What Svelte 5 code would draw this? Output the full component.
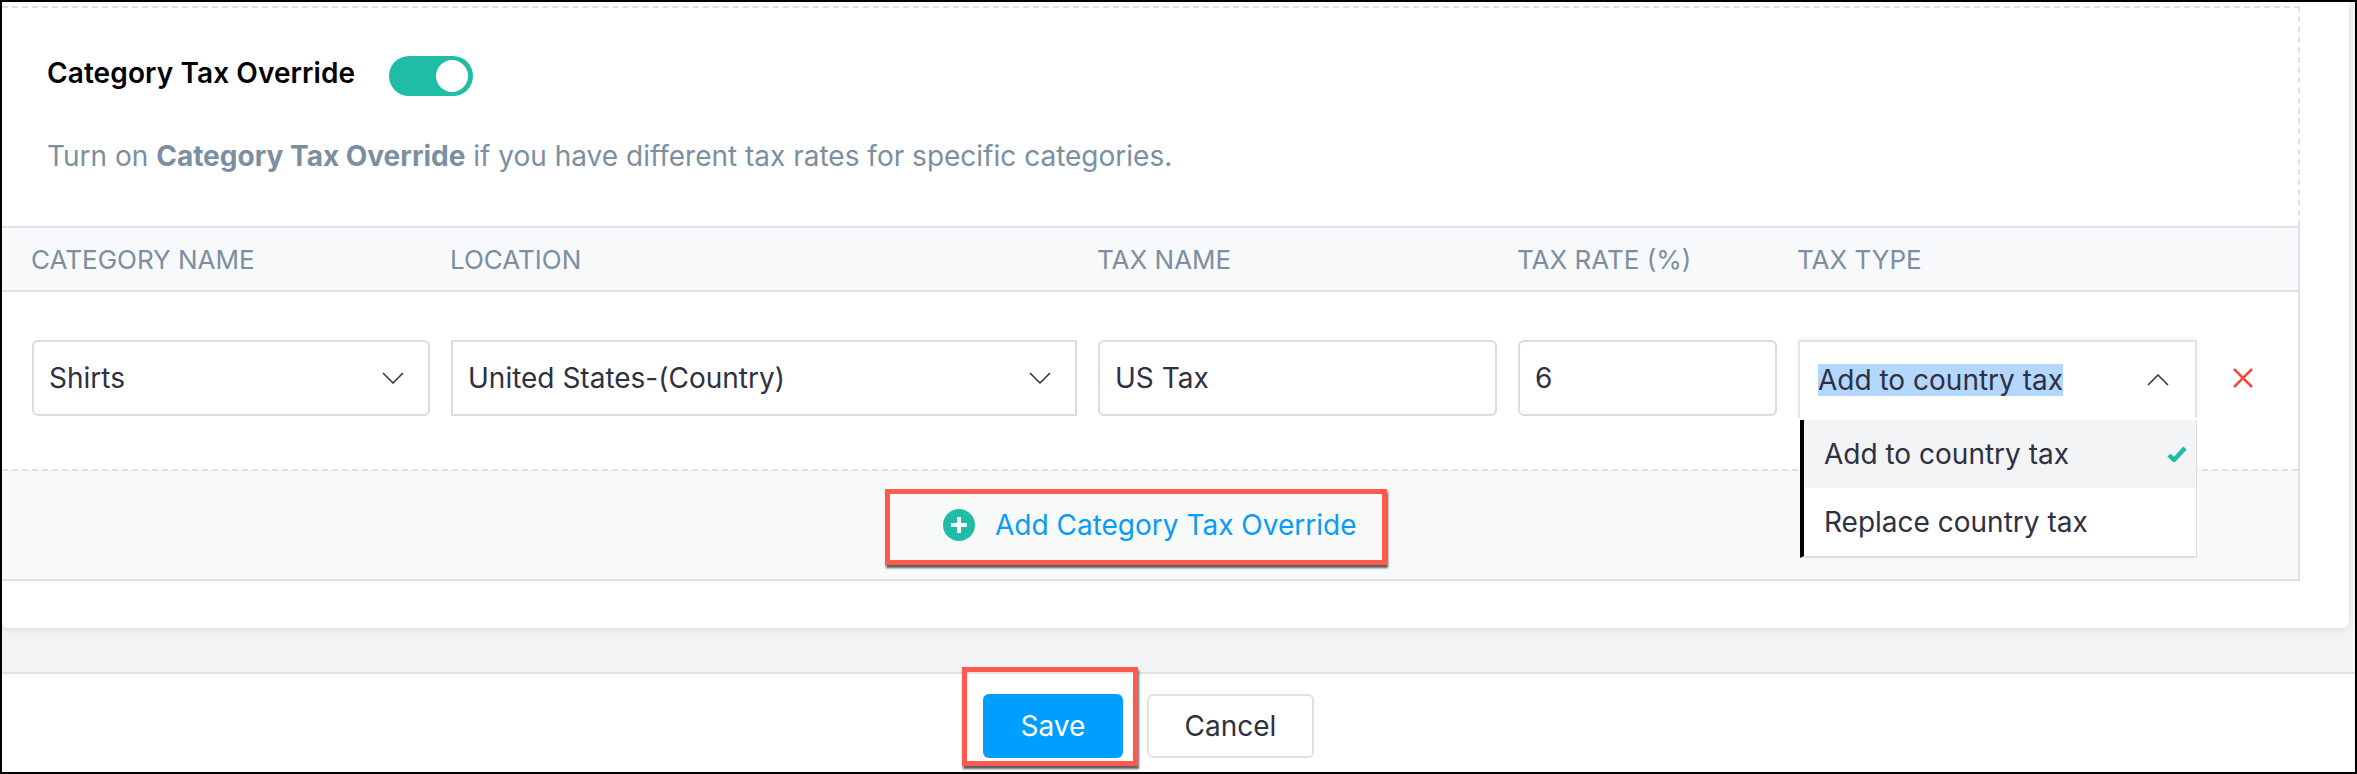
<script>
  let columns = ['CATEGORY NAME', 'LOCATION', 'TAX NAME', 'TAX RATE (%)', 'TAX TYPE'];
</script>

<div class="frame">
  <div class="card">
    <section class="intro">
      <div class="title-row">
        <h2>Category Tax Override</h2>
        <span class="toggle"><span class="knob"></span></span>
      </div>
      <p>Turn on <b>Category Tax Override</b> if you have different tax rates for specific categories.</p>
    </section>

    <div class="table">
      <div class="grid head">
        {#each columns as col}
          <span>{col}</span>
        {/each}
      </div>

      <div class="grid row">
        <div class="field select rounded">
          <span>Shirts</span>
          <svg class="chev" viewBox="0 0 22 12"><path d="M1 1l10 10L21 1" /></svg>
        </div>
        <div class="field select">
          <span>United States-(Country)</span>
          <svg class="chev" viewBox="0 0 22 12"><path d="M1 1l10 10L21 1" /></svg>
        </div>
        <div class="field rounded">US Tax</div>
        <div class="field rounded">6</div>
        <div class="type-wrap">
          <div class="field select open">
            <span class="picked">Add to country tax</span>
            <svg class="chev" viewBox="0 0 22 12"><path d="M1 11L11 1l10 10" /></svg>
          </div>
          <ul class="menu">
            <li class="active">
              Add to country tax
              <svg class="check" viewBox="0 0 20 16"><path d="M2 9l5 5L18 2" /></svg>
            </li>
            <li>Replace country tax</li>
          </ul>
        </div>
        <svg class="remove" viewBox="0 0 22 20"><path d="M2 1l18 18M20 1L2 19" /></svg>
      </div>

      <div class="add-row">
        <div class="mark add-mark">
          <svg class="plus" viewBox="0 0 32 32">
            <circle cx="16" cy="16" r="16" />
            <path d="M16 8v16M8 16h16" />
          </svg>
          <span>Add Category Tax Override</span>
        </div>
      </div>
    </div>
  </div>

  <div class="gap"></div>

  <div class="footer">
    <div class="buttons">
      <button class="save">Save</button>
      <button class="cancel">Cancel</button>
      <div class="mark save-mark"></div>
    </div>
  </div>
</div>

<style>
  :global(body) {
    margin: 0;
    background: #fff;
  }

  .frame {
    width: 2357px;
    height: 774px;
    box-sizing: border-box;
    border: 2px solid #000;
    background: #f3f4f6;
    display: flex;
    flex-direction: column;
    font-family: Inter, "Liberation Sans", sans-serif;
    font-size: 28px;
    color: #2f3042;
    overflow: hidden;
  }

  .card {
    width: 2347px;
    height: 626px;
    flex: none;
    background: #fff;
    border-radius: 0 0 6px 6px;
    box-shadow: 0 2px 6px rgba(0, 0, 0, 0.1);
    padding-top: 4px;
    box-sizing: border-box;
  }

  .intro {
    height: 220px;
    box-sizing: border-box;
    width: 2298px;
    border-top: 2px dashed #dfe1ea;
    border-right: 2px dashed #dfe1ea;
    padding: 48px 0 0 45px;
  }

  .title-row {
    display: flex;
    align-items: flex-start;
    gap: 34px;
    height: 40px;
  }

  h2 {
    margin: 0;
    font-size: 28px;
    font-weight: 600;
    color: #000;
    line-height: 34px;
    letter-spacing: 0.1px;
  }

  .toggle {
    width: 84px;
    height: 40px;
    border-radius: 20px;
    background: #1fbda6;
    display: flex;
    align-items: center;
    justify-content: flex-end;
    padding-right: 5px;
    box-sizing: border-box;
  }

  .knob {
    width: 32px;
    height: 32px;
    border-radius: 50%;
    background: #fff;
  }

  p {
    margin: 42px 0 0;
    font-size: 28px;
    line-height: 36px;
    color: #7b8fa1;
  }

  .table {
    width: 2298px;
    box-sizing: border-box;
    border-right: 2px solid #dfe1ea;
    border-bottom: 2px solid #dfe1ea;
  }

  .grid {
    display: grid;
    grid-template-columns: 398px 626px 399px 259px 399px auto;
    column-gap: 21px;
    padding-left: 30px;
  }

  .head {
    height: 66px;
    box-sizing: border-box;
    align-items: center;
    background: #f8f9fa;
    border-top: 2px solid #dfe1ea;
    border-bottom: 2px solid #dfe1ea;
    font-size: 26px;
    color: #7b8fa1;
    padding-left: 29px;
  }

  .row {
    height: 177px;
    box-sizing: border-box;
    padding-top: 48px;
  }

  .field {
    height: 76px;
    box-sizing: border-box;
    border: 2px solid #d9dce6;
    display: flex;
    align-items: center;
    padding: 0 15px;
    font-size: 28px;
    background: #fff;
  }

  .rounded {
    border-radius: 6px;
  }

  .select {
    justify-content: space-between;
    padding: 0 24px 0 15px;
  }

  .chev {
    width: 22px;
    height: 12px;
    fill: none;
    stroke: #2f3042;
    stroke-width: 1.5;
  }

  .type-wrap {
    position: relative;
  }

  .open {
    height: 78px;
    border: 2px solid #e4e5e9;
    border-bottom: 0;
    box-shadow: 0 -2px 4px rgba(0, 0, 0, 0.06);
    padding: 0 26px 0 18px;
  }

  .picked {
    background: #b3d7ff;
    line-height: 32px;
  }

  .menu {
    position: absolute;
    top: 80px;
    left: 0;
    right: 0;
    margin: 0 0 0 2px;
    padding: 0;
    list-style: none;
    background: #fff;
    border-left: 4px solid #000;
    border-right: 1px solid #dddddd;
    border-bottom: 2px solid #dddddd;
    z-index: 2;
  }

  .menu li {
    height: 68px;
    display: flex;
    align-items: center;
    justify-content: space-between;
    padding: 0 9px 0 20px;
  }

  .menu .active {
    background: #f2f4f5;
  }

  .check {
    width: 20px;
    height: 16px;
    fill: none;
    stroke: #1fbda6;
    stroke-width: 4.5;
  }

  .remove {
    width: 22px;
    height: 20px;
    margin: 28px 0 0 14px;
    fill: none;
    stroke: #ef4a3f;
    stroke-width: 2.5;
  }

  .add-row {
    border-top: 2px dashed #dfe1ea;
    background: #f8f9f9;
    padding-left: 883px;
    padding-top: 18px;
    height: 90px;
  }

  .mark {
    border: 5px solid #ff5a4e;
    box-shadow: 1px 3px 2px rgba(40, 40, 40, 0.75);
    box-sizing: border-box;
  }

  .add-mark {
    width: 502px;
    height: 76px;
    display: flex;
    align-items: center;
    gap: 20px;
    padding: 0 0 5px 53px;
    color: #0a9cf5;
    font-size: 28px;
  }

  .plus {
    width: 32px;
    height: 32px;
    flex: none;
  }

  .plus circle {
    fill: #1fbda6;
  }

  .plus path {
    stroke: #fff;
    stroke-width: 4;
    fill: none;
  }

  .gap {
    flex: 1;
  }

  .footer {
    height: 100px;
    flex: none;
    box-sizing: border-box;
    background: #fff;
    border-top: 2px solid #dfe1ea;
    padding: 20px 0 0 981px;
  }

  .buttons {
    position: relative;
    display: flex;
    gap: 24px;
    align-items: flex-start;
  }

  button {
    height: 64px;
    border-radius: 6px;
    font: inherit;
    font-size: 28px;
    padding: 0;
  }

  .save {
    width: 140px;
    background: #009fff;
    color: #fff;
    border: 0;
  }

  .cancel {
    width: 167px;
    background: #fff;
    color: #2f3042;
    border: 2px solid #dfe1ea;
  }

  .save-mark {
    position: absolute;
    left: -21px;
    top: -27px;
    width: 176px;
    height: 99px;
  }
</style>
